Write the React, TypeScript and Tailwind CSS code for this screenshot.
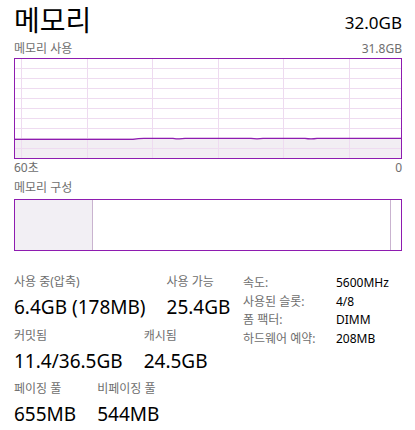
import { FC } from "react";

const font = { fontFamily: '"Noto Sans", "Noto Sans CJK KR", sans-serif' };

const vLines = [6, 72, 137, 203, 268, 334];
const hLines = [9, 19, 29, 39, 49, 59, 69, 79, 89];

const UsageGraph: FC = () => (
  <div className="h-[101px] w-full border border-[#8e1cb0] bg-white">
    <svg width="386" height="99" viewBox="0 0 386 99" className="block">
      <rect x="0" y="80" width="386" height="19" fill="#f2eef3" />
      {hLines.map((y) => (
        <line key={y} x1="0" x2="386" y1={y + 0.5} y2={y + 0.5} stroke="#eedbf0" strokeWidth="1" />
      ))}
      {vLines.map((x) => (
        <line key={x} x1={x + 0.5} x2={x + 0.5} y1="0" y2="99" stroke="#eedbf0" strokeWidth="1" />
      ))}
      <path
        d="M0 80.3 L118 80.3 Q124 79.2 130 79.3 L158 79.3 Q164 80.4 170 79.4 L236 79.4 Q242 80.3 248 79.4 L290 79.4 Q296 80.4 302 79.4 L386 79.4"
        fill="none"
        stroke="#8e1cb0"
        strokeWidth="1.3"
      />
    </svg>
  </div>
);

const CompositionBar: FC = () => (
  <div className="flex h-[52px] w-full border border-[#8e1cb0] bg-white">
    <div className="w-[78px] border-r border-[#c9b3cf] bg-[#f2eff4]" />
    <div className="w-[298px] border-r border-[#c9b3cf]" />
    <div className="flex-1" />
  </div>
);

type Stat = { label: string; value: string };

const StatRow: FC<{ items: Stat[] }> = ({ items }) => (
  <div className="flex gap-[21px]">
    {items.map((s) => (
      <div key={s.label} className="flex flex-col">
        <span className="text-[12px] leading-[18px] text-[#6e6e6e]">{s.label}</span>
        <span className="mt-[4px] text-[19px] leading-[24px] text-black">{s.value}</span>
      </div>
    ))}
  </div>
);

const specs = [
  ["속도:", "5600MHz"],
  ["사용된 슬롯:", "4/8"],
  ["폼 팩터:", "DIMM"],
  ["하드웨어 예약:", "208MB"],
];

export default function App() {
  return (
    <div className="h-[430px] w-[415px] overflow-hidden bg-white pl-[14px] pr-[13px]" style={font}>
      <div className="flex h-[40px] items-end justify-between">
        <h1 className="text-[28px] leading-[40px] text-black">메모리</h1>
        <span className="pb-[7px] text-[17px] leading-[20px] text-black">32.0GB</span>
      </div>
      <div className="flex h-[18px] items-center justify-between text-[12px] text-[#6e6e6e]">
        <span>메모리 사용</span>
        <span>31.8GB</span>
      </div>
      <UsageGraph />
      <div className="flex h-[18px] items-center justify-between text-[12px] text-[#6e6e6e]">
        <span>60초</span>
        <span>0</span>
      </div>
      <div className="flex h-[22px] items-center text-[12px] text-[#6e6e6e]">메모리 구성</div>
      <CompositionBar />
      <div className="mt-[22px] flex items-start">
        <div className="flex w-[229px] flex-col gap-[7.5px]">
          <StatRow
            items={[
              { label: "사용 중(압축)", value: "6.4GB (178MB)" },
              { label: "사용 가능", value: "25.4GB" },
            ]}
          />
          <StatRow
            items={[
              { label: "커밋됨", value: "11.4/36.5GB" },
              { label: "캐시됨", value: "24.5GB" },
            ]}
          />
          <StatRow
            items={[
              { label: "페이징 풀", value: "655MB" },
              { label: "비페이징 풀", value: "544MB" },
            ]}
          />
        </div>
        <div className="mt-[1px] grid grid-cols-[93px_auto] content-start text-[12px] leading-[18.5px]">
          {specs.map(([k, v]) => (
            <div key={k} className="contents">
              <span className="text-[#6e6e6e]">{k}</span>
              <span className="text-black">{v}</span>
            </div>
          ))}
        </div>
      </div>
    </div>
  );
}
